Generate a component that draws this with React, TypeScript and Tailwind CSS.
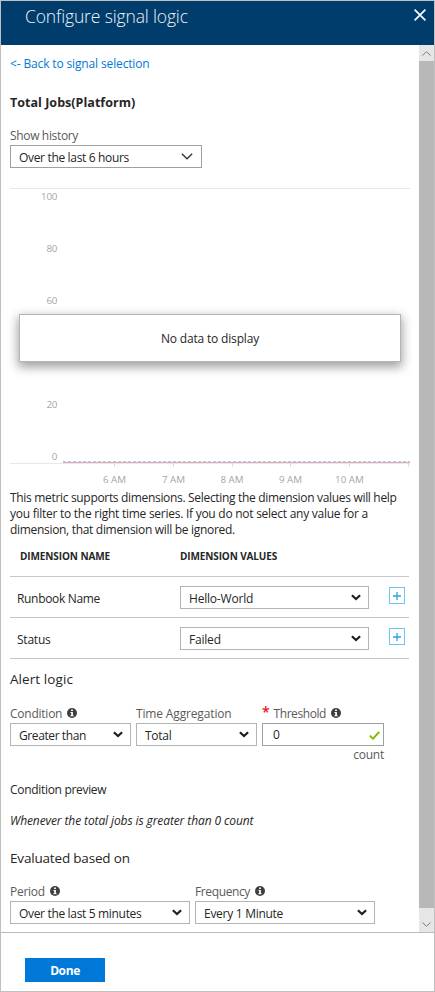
import type { ReactNode } from "react";

function BoldChevron() {
  return (
    <svg width="10" height="7" viewBox="0 0 10 7" fill="none" className="shrink-0">
      <path d="M0.9 1.2 5 5 9.1 1.2" stroke="#1f1f1f" strokeWidth="2.2" />
    </svg>
  );
}

function ThinChevron() {
  return (
    <svg width="12" height="7" viewBox="0 0 12 7" fill="none" className="shrink-0">
      <path d="M0.8 0.8 6 5.8 11.2 0.8" stroke="#333" strokeWidth="1.3" />
    </svg>
  );
}

function Info() {
  return (
    <svg width="10" height="10" viewBox="0 0 10 10" className="mb-1 ml-[5px] shrink-0">
      <circle cx="5" cy="5" r="5" fill="#3f3f3f" />
      <path d="M4.1 1.5h1.8v1.5H4.1zM3.5 4h2.4v3.3h.7v1H3.4v-1h.8V5h-.7z" fill="#fff" />
    </svg>
  );
}

function Select({
  width,
  className = "",
  thin = false,
  children,
}: {
  width: string;
  className?: string;
  thin?: boolean;
  children: ReactNode;
}) {
  return (
    <div
      className={`flex h-[23px] shrink-0 items-center justify-between border pl-2 ${
        thin ? "border-[#a0a0a0] pr-2" : "border-[#b4b4b4] pr-[7px]"
      } ${width}`}
    >
      <span className={`pt-[3px] leading-[18px] ${className}`}>{children}</span>
      {thin ? <ThinChevron /> : <BoldChevron />}
    </div>
  );
}

function AddButton() {
  return (
    <button className="mb-1 ml-5 flex h-[17px] w-4 items-center justify-center border border-[#6cc5f2]">
      <svg width="8" height="8" viewBox="0 0 8 8">
        <path d="M4 0v8M0 4h8" stroke="#2ba3e8" strokeWidth="1.3" />
      </svg>
    </button>
  );
}

const yLabels = [
  { text: "100", y: 12 },
  { text: "80", y: 64 },
  { text: "60", y: 116 },
  { text: "20", y: 220 },
  { text: "0", y: 272 },
];

const xLabels = [
  { text: "6 AM", x: 104.5 },
  { text: "7 AM", x: 163.5 },
  { text: "8 AM", x: 222 },
  { text: "9 AM", x: 280.5 },
  { text: "10 AM", x: 339.5 },
];

function Chart() {
  return (
    <div className="relative mt-5 h-[301px] w-[400px]">
      <svg width="400" height="301" viewBox="0 0 400 301" className="block text-[9.8px]" fill="#a6a6a6">
        <path d="M0 .5H400M0 275.5H400" stroke="#e8e8e8" />
        {yLabels.map((l) => (
          <text key={l.text} x="47" y={l.y} textAnchor="end" letterSpacing="-0.3">
            {l.text}
          </text>
        ))}
        {xLabels.map((l) => (
          <text key={l.text} x={l.x} y="295" textAnchor="middle">
            {l.text}
          </text>
        ))}
        <path d="M104.5 275v4M163.5 275v4M222.5 275v4M280.5 275v4M339.5 275v4M398.5 275v4" stroke="#dedede" />
        <path d="M53 274.5H400" stroke="#e3a9b9" />
        <path d="M53 273.5H400" stroke="#9fd6ea" strokeDasharray="3 2" />
      </svg>
      <div className="absolute top-[126px] left-[9px] flex h-12 w-[382px] items-center justify-center border border-[#b5b5b5] bg-white shadow-[0_4px_10px_1px_rgba(0,0,0,0.38)]">
        <span className="pt-0.5 leading-4 tracking-[-0.18px]">No data to display</span>
      </div>
    </div>
  );
}

function ScrollBar() {
  return (
    <div className="flex w-[15px] shrink-0 flex-col bg-[#b8b8b8]">
      <div className="flex h-4 items-center justify-center bg-[#e6e6e6]">
        <svg width="9" height="5" viewBox="0 0 9 5" fill="none">
          <path d="M.5 4.5 4.5.7 8.5 4.5" stroke="#7d7d7d" />
        </svg>
      </div>
      <div className="flex-1" />
      <div className="flex h-6 items-center justify-center bg-[#e6e6e6] pt-2">
        <svg width="9" height="5" viewBox="0 0 9 5" fill="none">
          <path d="M.5.5 4.5 4.3 8.5.5" stroke="#7d7d7d" />
        </svg>
      </div>
    </div>
  );
}

export default function App() {
  return (
    <div className="flex h-[992px] w-[435px] flex-col border border-[#c0c0c0] bg-white font-['Open_Sans','Noto_Sans',sans-serif] text-[12px] leading-4 whitespace-nowrap text-[#262626]">
      <header className="flex h-11 shrink-0 items-start justify-between bg-[#003d6c] pr-2 pl-6">
        <h1 className="mt-[3px] text-[17.5px] leading-6 font-light tracking-[-0.14px] text-[#edf3f7]">
          Configure signal logic
        </h1>
        <svg width="12" height="12" viewBox="0 0 12 12" className="mt-2">
          <path d="M.6.6 11.4 11.4M11.4.6.6 11.4" stroke="#fff" strokeWidth="1.7" />
        </svg>
      </header>

      <div className="flex min-h-0 flex-1">
        <main className="flex min-w-0 flex-1 flex-col items-start pl-[9px]">
          <a className="mt-[11px] tracking-[-0.14px] text-[#0078d7]">&lt;- Back to signal selection</a>
          <h2 className="mt-[23px] text-[12.5px] leading-4 font-bold tracking-[0.03px]">Total Jobs(Platform)</h2>
          <label className="mt-[17px] mb-px tracking-[-0.34px] text-[#5a5a5a]">Show history</label>
          <Select thin width="w-[192px]" className="tracking-[-0.33px]">
            Over the last 6 hours
          </Select>

          <Chart />

          <p className="relative top-px tracking-[-0.32px]">
            This metric supports dimensions. Selecting the dimension values will help
            <br />
            <span className="tracking-[-0.26px]">
              you filter to the right time series. If you do not select any value for a
            </span>
            <br />
            <span className="tracking-[-0.31px]">dimension, that dimension will be ignored.</span>
          </p>

          <section className="w-[399px]">
            <div className="flex h-10 border-b border-[#c6c6c6] pt-[11px] pl-2.5 text-[10px] font-bold">
              <span className="w-[160px] tracking-[-0.1px]">DIMENSION NAME</span>
              <span className="tracking-[-0.12px]">DIMENSION VALUES</span>
            </div>
            <div className="flex h-[41px] items-center border-b border-[#c6c6c6] pt-px pl-[7px]">
              <span className="w-[163px] pt-[3px] tracking-[-0.33px]">Runbook Name</span>
              <Select width="w-[189px]" className="tracking-[-0.2px]">
                Hello-World
              </Select>
              <AddButton />
            </div>
            <div className="flex h-[41px] items-center border-b border-[#c6c6c6] pt-px pl-[7px]">
              <span className="w-[163px] pt-[3px] tracking-[-0.22px]">Status</span>
              <Select width="w-[189px]" className="tracking-[-0.2px]">
                Failed
              </Select>
              <AddButton />
            </div>
          </section>

          <h3 className="mt-2.5 text-[13.5px] leading-5 tracking-[0.08px]">Alert logic</h3>

          <div className="mt-[17px] flex gap-[5px]">
            <div className="flex flex-col">
              <div className="mb-px flex h-4 items-end text-[#5a5a5a]">
                <span className="tracking-[-0.24px]">Condition</span>
                <Info />
              </div>
              <Select width="w-[121px]" className="tracking-[-0.4px]">
                Greater than
              </Select>
            </div>
            <div className="flex flex-col">
              <div className="mb-px flex h-4 items-end tracking-[-0.15px] text-[#5a5a5a]">Time Aggregation</div>
              <Select width="w-[121px]" className="tracking-[-0.28px]">
                Total
              </Select>
            </div>
            <div className="flex flex-col">
              <div className="mb-px flex h-4 items-end text-[#5a5a5a]">
                <span className="mb-0.5 w-[11.5px] text-[14px] leading-4 font-semibold text-[#e81123]">*</span>
                <span className="tracking-[-0.42px]">Threshold</span>
                <Info />
              </div>
              <div className="flex h-[23px] w-[122px] items-center justify-between border border-[#a0a0a0] pr-[3px] pl-2.5">
                <span>0</span>
                <svg width="11" height="9" viewBox="0 0 11 9" fill="none" className="mt-px">
                  <path d="M.8 4.6 4 7.7 10.2.8" stroke="#7fba00" strokeWidth="1.9" />
                </svg>
              </div>
              <span className="mt-px mb-px self-end tracking-[-0.25px] text-[#5a5a5a]">count</span>
            </div>
          </div>

          <p className="mt-[18px] tracking-[-0.31px]">Condition preview</p>
          <p className="mt-[15px] tracking-[-0.1px] italic">Whenever the total jobs is greater than 0 count</p>

          <h3 className="mt-[19px] text-[13.5px] leading-5 tracking-[-0.18px]">Evaluated based on</h3>

          <div className="mt-4 flex gap-[5px]">
            <div className="flex flex-col">
              <div className="mb-px flex h-4 items-end text-[#5a5a5a]">
                <span className="tracking-[-0.28px]">Period</span>
                <Info />
              </div>
              <Select width="w-[180px]" className="tracking-[-0.33px]">
                Over the last 5 minutes
              </Select>
            </div>
            <div className="flex flex-col">
              <div className="mb-px flex h-4 items-end text-[#5a5a5a]">
                <span className="tracking-[-0.38px]">Frequency</span>
                <Info />
              </div>
              <Select width="w-[180px]" className="tracking-[-0.28px]">
                Every 1 Minute
              </Select>
            </div>
          </div>
        </main>
        <ScrollBar />
      </div>

      <footer className="h-[59px] shrink-0 border-t border-[#b9b9b9] pt-[25px] pl-6">
        <button className="block h-6 w-20 bg-[#0078d7] pt-0.5 font-bold tracking-[-0.4px] text-white">Done</button>
      </footer>
    </div>
  );
}
